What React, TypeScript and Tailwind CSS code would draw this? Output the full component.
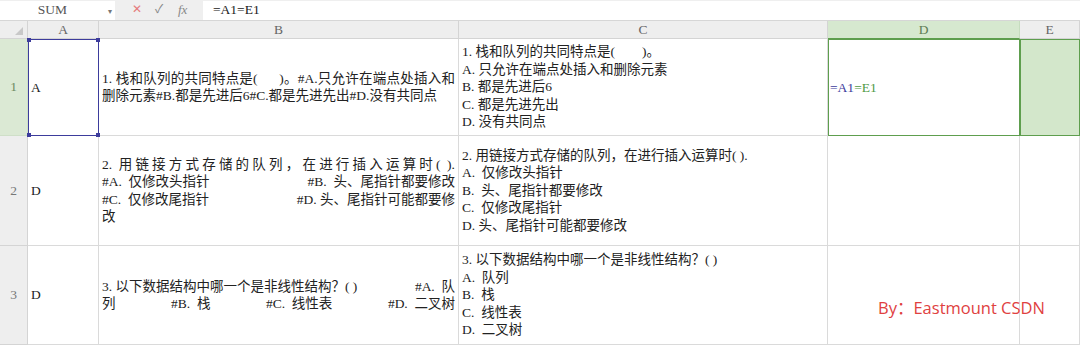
import React from "react";

const serif = "font-['Liberation_Serif','Noto_Sans_CJK_SC',serif]";

const cols = ["A", "B", "C", "D", "E"];

function Handle({ pos }: { pos: string }) {
  return <div className={`absolute h-[4px] w-[4px] bg-[#3d3c9c] ${pos}`} />;
}

function Lines({ lines }: { lines: string[] }) {
  return (
    <div className="flex flex-col">
      {lines.map((l, i) => (
        <div key={i} className="whitespace-pre">
          {l}
        </div>
      ))}
    </div>
  );
}

export default function App() {
  return (
    <div
      className={`relative h-[347px] w-[1080px] overflow-hidden bg-white text-[13.5px] leading-[17.5px] text-[#222] ${serif}`}
    >
      {/* formula bar */}
      <div className="flex h-[21px] items-center border-b border-[#d6d6d6] bg-[#efefef]">
        <div className="relative flex h-[19px] w-[115px] items-center justify-center bg-white text-[#555]">
          <span className="mr-[10px]">SUM</span>
          <span className="absolute right-[3px] top-[2px] text-[8px] text-[#777]">▾</span>
        </div>
        <div className="flex w-[88px] items-center pl-[17px] text-[#999]">
          <span className="w-[23px] text-[12px] text-[#e57c7c]">✕</span>
          <span className="w-[23px] text-[12px] text-[#888]">✓</span>
          <span className="italic text-[13px] text-[#888]">fx</span>
        </div>
        <div className="flex h-[19px] flex-1 items-center bg-white pl-[10px] text-[#222]">
          =A1=E1
        </div>
      </div>

      {/* sheet */}
      <div className="grid grid-cols-[28px_71px_360px_369px_192px_60px] grid-rows-[18px_97px_110px_99px]">
        {/* header row */}
        <div className="relative border-b border-r border-[#d4d4d4] bg-[#eeeeee]">
          <div className="absolute bottom-[3px] right-[4px] h-0 w-0 border-b-[8px] border-l-[8px] border-b-[#c8c8c8] border-l-transparent" />
        </div>
        {cols.map((c) => (
          <div
            key={c}
            className={
              c === "D"
                ? "flex items-center justify-center border-b border-r border-b-[#5e9e4e] border-r-[#c6dcbf] bg-[#d6e8cf] text-[#5e7c55]"
                : "flex items-center justify-center border-b border-r border-[#d4d4d4] bg-[#eeeeee] text-[#666]"
            }
          >
            {c}
          </div>
        ))}

        {/* row 1 */}
        <div className="flex items-center justify-center border-b border-r border-[#cfdfc8] bg-[#dbe9d4] text-[#6c8a62]">
          1
        </div>
        <div className="relative flex items-center border-[1.5px] border-[#3d3c9c] pl-[2px]">
          A
          <Handle pos="-left-[2px] -top-[2px]" />
          <Handle pos="-right-[2px] -top-[2px]" />
          <Handle pos="-left-[2px] -bottom-[2px]" />
          <Handle pos="-right-[2px] -bottom-[2px]" />
        </div>
        <div className="flex flex-col justify-center border-b border-r border-[#dadada] px-[3px]">
          <div className="whitespace-nowrap [text-align-last:justify] text-justify">
            1. 栈和队列的共同特点是(&nbsp;&nbsp;&nbsp;&nbsp;&nbsp;&nbsp;)。#A.只允许在端点处插入和
          </div>
          <div className="whitespace-nowrap">删除元素#B.都是先进后6#C.都是先进先出#D.没有共同点</div>
        </div>
        <div className="flex items-center border-b border-r border-[#dadada] pl-[3px]">
          <Lines
            lines={[
              "1. 栈和队列的共同特点是(        )。",
              "A. 只允许在端点处插入和删除元素",
              "B. 都是先进后6",
              "C. 都是先进先出",
              "D. 没有共同点",
            ]}
          />
        </div>
        <div className="flex items-center border-[1.5px] border-[#5e9e4e] pl-[1px]">
          <span className="text-[#3d3c9c]">=A1</span>
          <span className="text-[#4f9a45]">=E1</span>
        </div>
        <div className="border-[1.5px] border-[#5e9e4e] bg-[#d3e7cb]" />

        {/* row 2 */}
        <div className="flex items-center justify-center border-b border-r border-[#d4d4d4] bg-[#eeeeee] text-[#777]">
          2
        </div>
        <div className="flex items-center border-b border-r border-[#dadada] pl-[3px]">D</div>
        <div className="flex flex-col justify-center border-b border-r border-[#dadada] px-[3px]">
          <div className="[text-align-last:justify] text-justify">
            2. 用链接方式存储的队列，在进行插入运算时( ).
          </div>
          <div className="flex justify-between whitespace-pre">
            <span>#A.  仅修改头指针</span>
            <span>#B.  头、尾指针都要修改</span>
          </div>
          <div className="flex justify-between whitespace-pre">
            <span>#C.  仅修改尾指针</span>
            <span>#D. 头、尾指针可能都要修</span>
          </div>
          <div>改</div>
        </div>
        <div className="flex items-center border-b border-r border-[#dadada] pl-[3px]">
          <Lines
            lines={[
              "2. 用链接方式存储的队列，在进行插入运算时( ).",
              "A.  仅修改头指针",
              "B.  头、尾指针都要修改",
              "C.  仅修改尾指针",
              "D. 头、尾指针可能都要修改",
            ]}
          />
        </div>
        <div className="border-b border-r border-[#dadada]" />
        <div className="border-b border-r border-[#dadada]" />

        {/* row 3 */}
        <div className="flex items-center justify-center border-b border-r border-[#d4d4d4] bg-[#eeeeee] text-[#777]">
          3
        </div>
        <div className="flex items-center border-b border-r border-[#dadada] pl-[3px]">D</div>
        <div className="flex flex-col justify-center border-b border-r border-[#dadada] px-[3px]">
          <div className="flex justify-between whitespace-pre">
            <span>3. 以下数据结构中哪一个是非线性结构？( )</span>
            <span>#A.  队</span>
          </div>
          <div className="flex justify-between whitespace-pre">
            <span>列</span>
            <span>#B.  栈</span>
            <span>#C.  线性表</span>
            <span>#D.  二叉树</span>
          </div>
        </div>
        <div className="flex items-center border-b border-r border-[#dadada] pl-[3px]">
          <Lines
            lines={[
              "3. 以下数据结构中哪一个是非线性结构？( )",
              "A.  队列",
              "B.  栈",
              "C.  线性表",
              "D.  二叉树",
            ]}
          />
        </div>
        <div className="border-b border-r border-[#dadada]" />
        <div className="border-b border-r border-[#dadada]" />
      </div>

      {/* watermark */}
      <div className="absolute left-[878px] top-[297px] font-['Open_Sans','Noto_Sans_CJK_SC',sans-serif] text-[16.5px] leading-[22px] text-[#e0413f]">
        By：Eastmount CSDN
      </div>
    </div>
  );
}
